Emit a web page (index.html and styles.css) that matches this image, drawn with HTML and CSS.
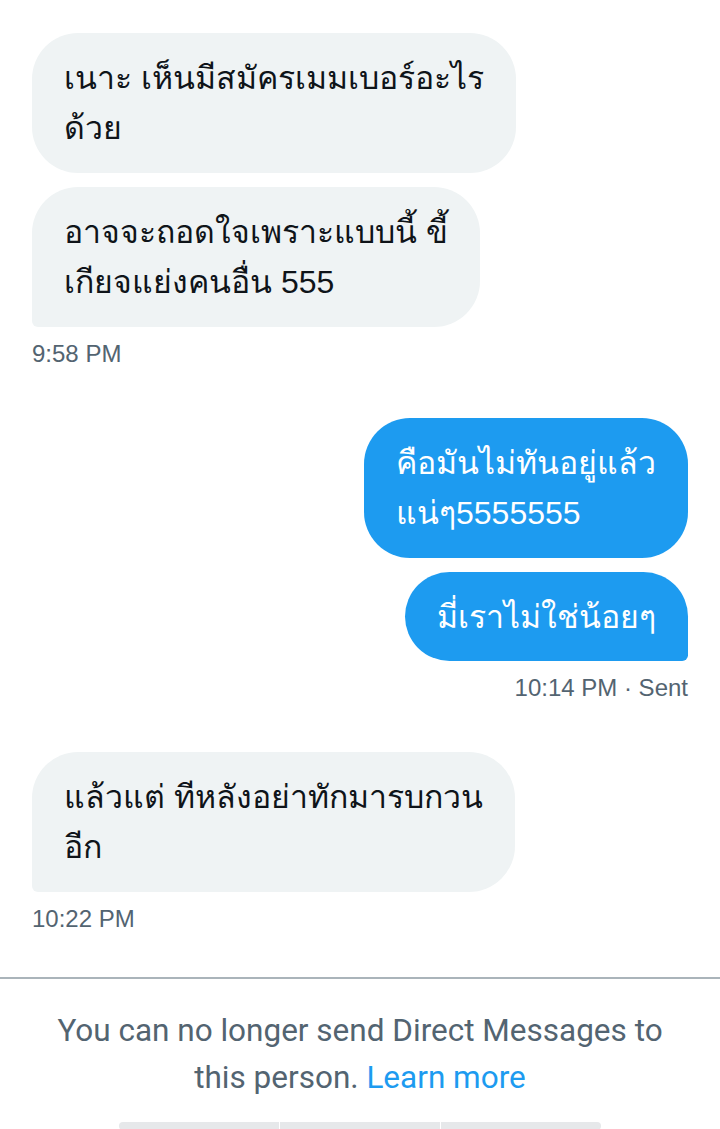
FILE: index.html
```html
<!DOCTYPE html>
<html lang="th">
<head>
<meta charset="UTF-8">
<meta name="viewport" content="width=device-width, initial-scale=1.0">
<title>Messages</title>
<link rel="stylesheet" href="styles.css">
</head>
<body>

<section class="conversation">
    <div class="group received">
        <div class="bubble">เนาะ เห็นมีสมัครเมมเบอร์อะไร<br>ด้วย</div>
        <div class="bubble last">อาจจะถอดใจเพราะแบบนี้ ขี้<br>เกียจแย่งคนอื่น 555</div>
        <div class="time">9:58 PM</div>
    </div>

    <div class="group sent">
        <div class="bubble">คือมันไม่ทันอยู่แล้ว<br>แน่ๆ5555555</div>
        <div class="bubble last">มี่เราไม่ใช่น้อยๆ</div>
        <div class="time">10:14 PM · Sent</div>
    </div>

    <div class="group received">
        <div class="bubble last">แล้วแต่ ทีหลังอย่าทักมารบกวน<br>อีก</div>
        <div class="time">10:22 PM</div>
    </div>
</section>

<footer class="notice">
    <p>You can no longer send Direct Messages to this person. <a href="#">Learn more</a></p>
    <div class="handle">
        <span></span><span></span><span></span>
    </div>
</footer>

</body>
</html>
```

FILE: styles.css
```css
body {
    margin: 0;
    padding: 0;
    background-color: #ffffff;
    font-family: "Liberation Sans", Roboto, "Noto Sans", sans-serif;
    color: #0f1419;
}

.conversation {
    padding: 33px 32px 0;
    display: flex;
    flex-direction: column;
    gap: 51px;
}

.group {
    display: flex;
    flex-direction: column;
    gap: 14px;
}

.group.received {
    align-items: flex-start;
}

.group.sent {
    align-items: flex-end;
}

.bubble {
    font-size: 32px;
    line-height: 50px;
    padding: 20px 32px;
    border-radius: 46px;
    white-space: nowrap;
}

.received .bubble {
    background-color: #eff3f4;
}

.received .bubble.last {
    border-bottom-left-radius: 6px;
}

.sent .bubble {
    background-color: #1d9bf0;
    color: #ffffff;
}

.sent .bubble.last {
    border-bottom-right-radius: 6px;
    padding-bottom: 19px;
}

.time {
    font-size: 24px;
    line-height: 26px;
    color: #536471;
}

.notice {
    margin-top: 45px;
    border-top: 2px solid #aab4ba;
    text-align: center;
}

.notice p {
    margin: 28px 40px 0;
    font-family: Roboto, "Noto Sans", sans-serif;
    font-size: 31.5px;
    line-height: 47px;
    color: #536471;
}

.notice a {
    color: #1d9bf0;
    text-decoration: none;
}

.handle {
    display: flex;
    justify-content: center;
    gap: 1px;
    margin-top: 21px;
}

.handle span {
    width: 160px;
    height: 8px;
    background-color: #e6e8ea;
}

.handle span:first-child {
    border-radius: 4px 0 0 4px;
}

.handle span:last-child {
    border-radius: 0 4px 4px 0;
}
```
